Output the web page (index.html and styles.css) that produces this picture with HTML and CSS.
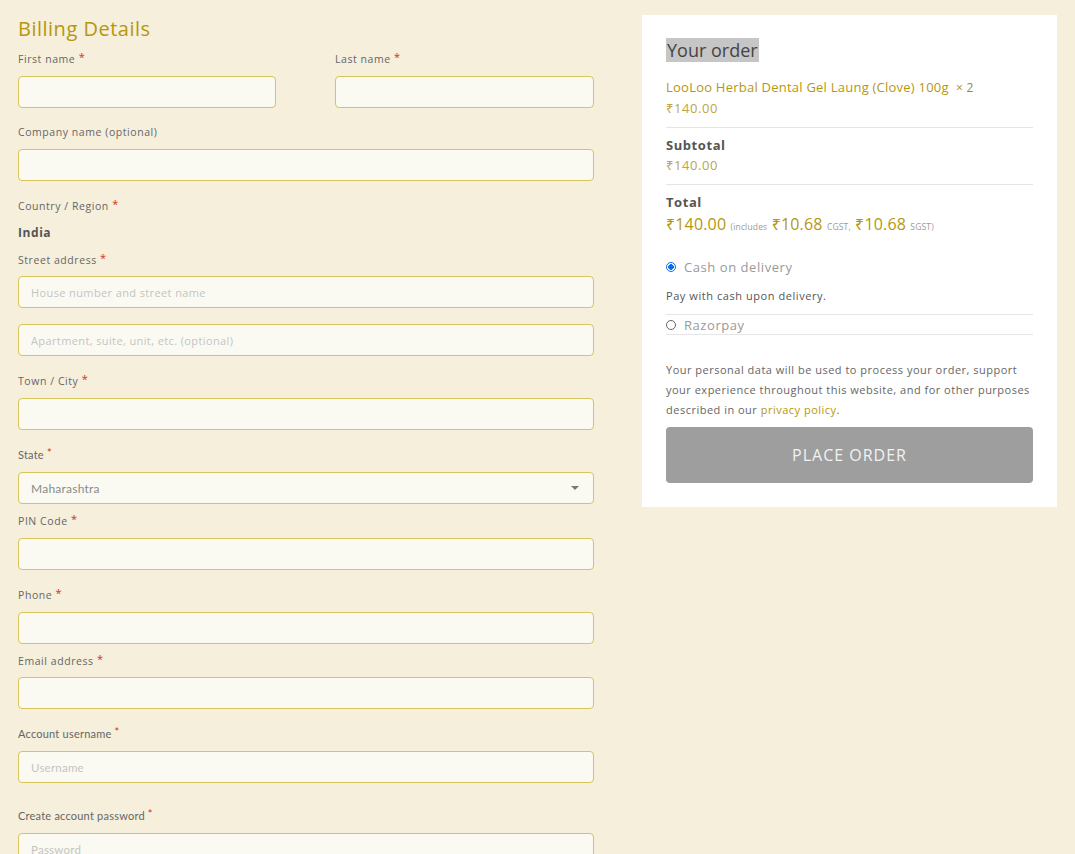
FILE: index.html
```html
<!DOCTYPE html>
<html lang="en">
<head>
<meta charset="utf-8">
<title>Checkout</title>
<link rel="stylesheet" href="styles.css">
</head>
<body>
<div class="page">
  <form class="billing">
    <h3 class="billing-title">Billing Details</h3>
    <div class="row-split">
      <div class="field">
        <label class="lbl">First name <span class="req">*</span></label>
        <input class="inp" type="text">
      </div>
      <div class="field">
        <label class="lbl">Last name <span class="req">*</span></label>
        <input class="inp" type="text">
      </div>
    </div>
    <div class="field">
      <label class="lbl">Company name (optional)</label>
      <input class="inp" type="text">
    </div>
    <div class="field">
      <label class="lbl">Country / Region <span class="req">*</span></label>
      <strong class="country">India</strong>
    </div>
    <div class="field">
      <label class="lbl lbl-short">Street address <span class="req">*</span></label>
      <input class="inp" type="text" placeholder="House number and street name">
    </div>
    <div class="field">
      <input class="inp" type="text" placeholder="Apartment, suite, unit, etc. (optional)">
    </div>
    <div class="field">
      <label class="lbl">Town / City <span class="req">*</span></label>
      <input class="inp" type="text">
    </div>
    <div class="field field-tight">
      <label class="lbl alt">State <span class="req">*</span></label>
      <div class="select">
        <span class="select-val">Maharashtra</span>
        <span class="select-arrow"></span>
      </div>
    </div>
    <div class="field">
      <label class="lbl">PIN Code <span class="req">*</span></label>
      <input class="inp" type="text">
    </div>
    <div class="field field-tight">
      <label class="lbl">Phone <span class="req">*</span></label>
      <input class="inp" type="text">
    </div>
    <div class="field">
      <label class="lbl lbl-short">Email address <span class="req">*</span></label>
      <input class="inp" type="text">
    </div>
    <div class="field field-loose">
      <label class="lbl alt">Account username <span class="req">*</span></label>
      <input class="inp alt" type="text" placeholder="Username">
    </div>
    <div class="field">
      <label class="lbl alt">Create account password <span class="req">*</span></label>
      <input class="inp alt" type="password" placeholder="Password">
    </div>
  </form>

  <aside class="order">
    <h3 class="order-title"><span class="hl">Your order</span></h3>
    <div class="order-item">
      <div class="prod">LooLoo Herbal Dental Gel Laung (Clove) 100g&nbsp; <span class="qty">× 2</span></div>
      <div class="price">₹140.00</div>
    </div>
    <div class="order-row">
      <div class="row-label">Subtotal</div>
      <div class="price">₹140.00</div>
    </div>
    <div class="order-row total">
      <div class="row-label">Total</div>
      <div class="total-line"><span class="big">₹140.00</span> <small>(includes</small> <span class="mid">₹10.68</span> <small>CGST,</small> <span class="mid">₹10.68</span> <small>SGST)</small></div>
    </div>
    <div class="pay">
      <div class="pay-opt">
        <span class="radio checked"></span>
        <span class="pay-name">Cash on delivery</span>
      </div>
      <p class="pay-desc">Pay with cash upon delivery.</p>
      <div class="pay-opt bordered">
        <span class="radio"></span>
        <span class="pay-name">Razorpay</span>
      </div>
    </div>
    <p class="privacy">Your personal data will be used to process your order, support your experience throughout this website, and for other purposes described in our <a class="link" href="#">privacy policy</a>.</p>
    <button class="place" type="button">PLACE ORDER</button>
  </aside>
</div>
</body>
</html>
```

FILE: styles.css
```css
* { box-sizing: border-box; }
html, body { margin: 0; padding: 0; }
body {
  background: #f5efdc;
  font-family: "Open Sans", "Noto Sans", "DejaVu Sans", sans-serif;
  color: #555;
  letter-spacing: 0.035em;
}
.page {
  display: flex;
  align-items: flex-start;
  gap: 48px;
  padding: 15px 18px 0 18px;
}
.billing {
  width: 576px;
  flex: none;
}
.billing-title {
  margin: 2px 0 9px;
  font-size: 20px;
  line-height: 24px;
  font-weight: 400;
  color: #b5970e;
  letter-spacing: 0.025em;
}
.row-split {
  display: flex;
  justify-content: space-between;
  margin-bottom: -1px;
}
.row-split .field { width: 258px; }
.row-split .field:last-child { width: 259px; }
.field { margin-bottom: 16px; }
.field-tight { margin-bottom: 8px; }
.field-loose { margin-bottom: 24px; }
.lbl {
  display: block;
  font-size: 10.5px;
  line-height: 18px;
  color: #666;
  margin-bottom: 8px;
}
.lbl-short { margin-bottom: 7px; }
.lbl.alt { font-family: "Lato", "Open Sans", sans-serif; font-size: 11px; letter-spacing: 0.02em; }
.req { color: #d0311b; font-size: 11px; position: relative; top: -2px; }
.country {
  display: block;
  font-size: 12px;
  line-height: 18px;
  font-weight: 700;
  color: #555;
  margin-top: 9px;
  margin-bottom: -7px;
}
.inp, .select {
  display: block;
  width: 100%;
  height: 32px;
  background: #fbfaf2;
  border: 1px solid #d6c45c;
  border-radius: 4px;
  padding: 0 12px;
  font-family: inherit;
  font-size: 11px;
  letter-spacing: 0.035em;
  color: #555;
  outline: none;
}
.inp::placeholder { color: #c4c4c4; }
.inp.alt { font-family: "Lato", "Open Sans", sans-serif; font-size: 11.5px; letter-spacing: 0.02em; }
.select {
  display: flex;
  align-items: center;
  justify-content: space-between;
}
.select-val {
  font-family: "Lato", "Open Sans", sans-serif;
  font-size: 12px;
  color: #8a8a8a;
  letter-spacing: 0.02em;
}
.select-arrow {
  width: 0;
  height: 0;
  border-left: 4px solid transparent;
  border-right: 4px solid transparent;
  border-top: 4px solid #777;
  margin-right: 2px;
}

.order {
  width: 415px;
  flex: none;
  background: #fff;
  padding: 24px 24px 24px;
}
.order-title {
  margin: -1px 0 15px;
  font-size: 18px;
  line-height: 24px;
  font-weight: 400;
  color: #444;
  letter-spacing: 0;
}
.hl { background: #c6c6c6; padding: 0 1px; }
.order-item, .order-row {
  border-bottom: 1px solid #e5e5e5;
  padding-bottom: 9px;
  margin-bottom: 7px;
}
.prod { font-size: 13px; line-height: 20px; color: #b5970e; letter-spacing: 0.018em; }
.qty { color: #a08a2c; font-size: 12px; }
.price { font-size: 13px; line-height: 20px; color: #bda548; }
.row-label { font-size: 13px; line-height: 20px; font-weight: 700; color: #555; }
.order-row.total { border-bottom: none; margin-bottom: 9px; }
.total-line { color: #b5970e; line-height: 24px; letter-spacing: 0.01em; }
.total-line .big { font-size: 16px; }
.total-line .mid { font-size: 16px; }
.total-line small { font-size: 8.5px; color: #999; }
.pay { margin-bottom: 25px; }
.pay-opt {
  display: flex;
  align-items: center;
  gap: 8px;
  height: 20px;
}
.pay-opt.bordered {
  border-top: 1px solid #e5e5e5;
  border-bottom: 1px solid #e5e5e5;
  height: 21px;
}
.radio {
  width: 10px;
  height: 10px;
  border-radius: 50%;
  border: 1px solid #666;
  background: #fff;
  flex: none;
}
.radio.checked {
  border: 1px solid #0b6ee8;
  background: radial-gradient(circle, #0b6ee8 0 2.6px, #fff 3px);
}
.pay-name { font-size: 13px; color: #999; }
.pay-desc {
  margin: 0;
  padding: 9px 0 8px;
  font-size: 11px;
  line-height: 20px;
  color: #555;
}
.privacy {
  margin: 0 0 7px;
  font-size: 11px;
  line-height: 20px;
  color: #666;
  letter-spacing: 0.045em;
}
.link { color: #b5970e; text-decoration: none; }
.place {
  display: block;
  width: 100%;
  height: 56px;
  border: none;
  border-radius: 4px;
  background: #9e9e9e;
  color: #f2f2f2;
  font-family: inherit;
  font-size: 16px;
  letter-spacing: 1px;
}
```
